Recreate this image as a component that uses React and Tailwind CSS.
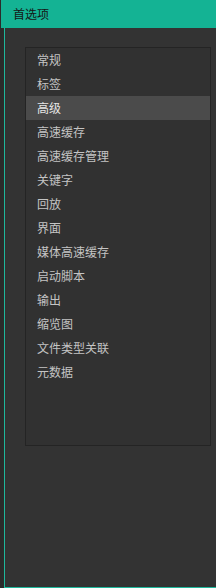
const items = [
  "常规",
  "标签",
  "高级",
  "高速缓存",
  "高速缓存管理",
  "关键字",
  "回放",
  "界面",
  "媒体高速缓存",
  "启动脚本",
  "输出",
  "缩览图",
  "文件类型关联",
  "元数据",
];

export default function App() {
  const selected = 2;
  return (
    <div
      className="w-[216px] h-[588px] bg-[#2b2b2b] flex flex-col overflow-hidden"
      style={{ fontFamily: '"Noto Sans CJK SC", "Liberation Sans", sans-serif' }}
    >
      {/* title bar */}
      <div className="h-[28px] ml-[1px] bg-[#14b394] flex items-center pl-[12px] text-[12px] text-[#161616]">
        首选项
      </div>

      {/* body */}
      <div className="flex-1 ml-[4px] border-l border-b border-[#1fb89c] bg-[#333333] flex flex-col">
        <div className="mt-[19px] ml-[20px] mr-[5px] h-[399px] border border-[#242424] bg-[#313131] flex flex-col">
          {items.map((item, i) => (
            <div
              key={item}
              className={
                "h-6 flex items-center pl-[11px] text-[12px] " +
                (i === selected ? "bg-[#4b4b4b] text-[#e6e6e6]" : "text-[#c4c4c4]")
              }
            >
              {item}
            </div>
          ))}
        </div>
      </div>
    </div>
  );
}
